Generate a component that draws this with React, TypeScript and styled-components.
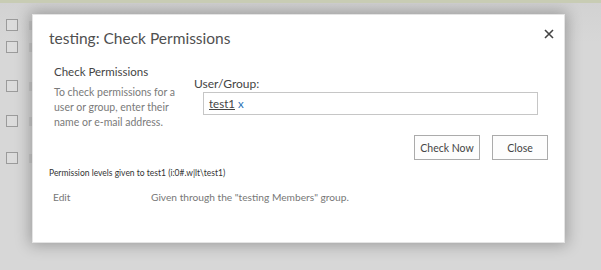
import React from 'react';
import styled, { createGlobalStyle } from 'styled-components';

const GlobalStyle = createGlobalStyle`
  html, body {
    margin: 0;
    padding: 0;
    background: #d6d6d6;
  }
  body {
    font-family: Lato, "Open Sans", "Liberation Sans", sans-serif;
    color: #444;
  }
`;

const Page = styled.div`
  position: relative;
  width: 601px;
  height: 270px;
  overflow: hidden;
  background: linear-gradient(#d2d2d2, #d7d7d7 40px);
  border-top: 3px solid #c8ccb4;
  box-sizing: border-box;
`;

const RowList = styled.div`
  display: flex;
  flex-direction: column;
  padding: 16px 0 0 6px;
`;

const Row = styled.div<{ $gap: number }>`
  display: flex;
  align-items: center;
  gap: 11px;
  height: 12px;
  margin-top: ${(p) => p.$gap}px;
`;

const Checkbox = styled.span`
  width: 10px;
  height: 10px;
  border: 1px solid #9b9b9b;
  background: #dcdcdc;
`;

const RowMark = styled.span`
  width: 6px;
  height: 9px;
  background: #c9c9c9;
`;

const Dialog = styled.div`
  position: absolute;
  left: 32px;
  top: 11px;
  width: 533px;
  height: 229px;
  box-sizing: border-box;
  background: #fff;
  border: 1px solid #e4e4e4;
  box-shadow: 0 0 14px 2px rgba(0, 0, 0, 0.28);
  padding: 13px 0 0 16px;
`;

const TitleBar = styled.div`
  display: flex;
  justify-content: space-between;
  align-items: flex-start;
  padding-right: 10px;
`;

const Title = styled.h1`
  margin: 0;
  font-weight: 400;
  font-size: 15.5px;
  line-height: 20px;
  color: #505050;
`;

const CloseX = styled.button`
  border: 0;
  background: none;
  padding: 0;
  margin-top: 1px;
  width: 10px;
  height: 10px;
  display: flex;
  cursor: pointer;
`;

const Section = styled.div`
  display: flex;
  margin-top: 17px;
  padding-left: 5px;
`;

const Description = styled.div`
  width: 140px;
`;

const SubHead = styled.div`
  font-size: 11.5px;
  line-height: 14px;
  color: #444;
`;

const Help = styled.div`
  margin-top: 6px;
  font-size: 10.5px;
  line-height: 15px;
  color: #7a7a7a;
`;

const Field = styled.div`
  display: flex;
  flex-direction: column;
  padding-top: 12px;
`;

const FieldLabel = styled.div`
  font-size: 12px;
  line-height: 14px;
  color: #444;
`;

const PeopleBox = styled.div`
  margin: 1px 0 0 9px;
  width: 335px;
  height: 23px;
  box-sizing: border-box;
  border: 1px solid #c6c6c6;
  display: flex;
  align-items: center;
  gap: 3px;
  padding-left: 5px;
  font-size: 11.5px;
`;

const Person = styled.span`
  color: #444;
  text-decoration: underline;
`;

const Remove = styled.span`
  color: #2a72b5;
`;

const Actions = styled.div`
  display: flex;
  justify-content: flex-end;
  gap: 12px;
  margin-top: 5px;
  padding-right: 16px;
`;

const Button = styled.button<{ $w: number }>`
  width: ${(p) => p.$w}px;
  height: 25px;
  border: 1px solid #ababab;
  background: #fdfdfd;
  font-family: inherit;
  font-size: 10.5px;
  color: #444;
  padding: 0;
`;

const LevelsCaption = styled.div`
  margin-top: 8px;
  font-size: 8.5px;
  line-height: 10px;
  color: #333;
`;

const LevelRow = styled.div`
  display: grid;
  grid-template-columns: 98px 1fr;
  margin-top: 12px;
  padding-left: 4px;
  font-size: 10.2px;
  line-height: 14px;
  color: #777;
`;

const rows = [0, 10, 27, 23, 25];

export default function App() {
  return (
    <>
      <GlobalStyle />
      <Page>
        <RowList>
          {rows.map((gap, i) => (
            <Row key={i} $gap={gap}>
              <Checkbox />
              <RowMark />
            </Row>
          ))}
        </RowList>
        <Dialog>
          <TitleBar>
            <Title>testing: Check Permissions</Title>
            <CloseX aria-label="Close">
              <svg width="10" height="10" viewBox="0 0 10 10">
                <path d="M1 1 L9 9 M9 1 L1 9" stroke="#444" strokeWidth="1.6" />
              </svg>
            </CloseX>
          </TitleBar>
          <Section>
            <Description>
              <SubHead>Check Permissions</SubHead>
              <Help>
                To check permissions for a user or group, enter their name or e-mail address.
              </Help>
            </Description>
            <Field>
              <FieldLabel>User/Group:</FieldLabel>
              <PeopleBox>
                <Person>test1</Person>
                <Remove>x</Remove>
              </PeopleBox>
            </Field>
          </Section>
          <Actions>
            <Button $w={66}>Check Now</Button>
            <Button $w={56}>Close</Button>
          </Actions>
          <LevelsCaption>Permission levels given to test1 (i:0#.w|lt\test1)</LevelsCaption>
          <LevelRow>
            <span>Edit</span>
            <span>Given through the "testing Members" group.</span>
          </LevelRow>
        </Dialog>
      </Page>
    </>
  );
}
